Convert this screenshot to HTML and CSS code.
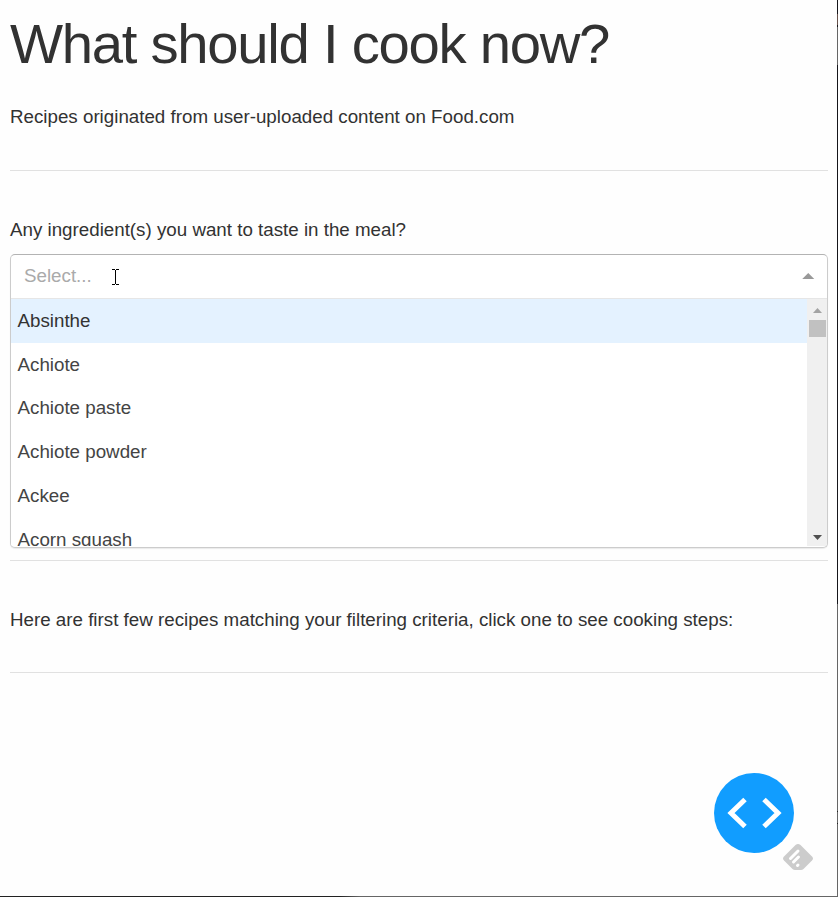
FILE: index.html
```html
<!DOCTYPE html>
<html lang="en">
<head>
<meta charset="utf-8">
<title>What should I cook now?</title>
<link rel="stylesheet" href="styles.css">
</head>
<body>
<main class="page">
  <h1 class="title">What should I cook now?</h1>
  <p class="intro">Recipes originated from user-uploaded content on Food.com</p>
  <hr class="rule">
  <label class="question">Any ingredient(s) you want to taste in the meal?</label>
  <div class="select">
    <div class="control">
      <span class="placeholder">Select...</span>
      <svg class="text-cursor" viewBox="0 0 7 16" width="7" height="16" shape-rendering="crispEdges"><path d="M0 0h3v1h1V0h3v1H4v14h3v1H4v-1H3v1H0v-1h3V1H0z"/></svg>
      <svg class="caret" viewBox="0 0 12.5 6.25" width="12.5" height="6.25"><path d="M0 6.25 6.25 0l6.25 6.25z" fill="#999"/></svg>
    </div>
    <div class="menu">
      <div class="options">
        <div class="option focused">Absinthe</div>
        <div class="option">Achiote</div>
        <div class="option">Achiote paste</div>
        <div class="option">Achiote powder</div>
        <div class="option">Ackee</div>
        <div class="option">Acorn squash</div>
      </div>
      <div class="scrollbar">
        <svg class="arrow" viewBox="0 0 9 5" width="9" height="5"><path d="M0 5 4.5 0 9 5z" fill="#a3a3a3"/></svg>
        <div class="thumb"></div>
        <svg class="arrow down" viewBox="0 0 9 5" width="9" height="5"><path d="M0 0h9L4.5 5z" fill="#505050"/></svg>
      </div>
    </div>
  </div>
  <hr class="rule after-select">
  <p class="results">Here are first few recipes matching your filtering criteria, click one to see cooking steps:</p>
  <hr class="rule last">
</main>
<div class="debug">
  <svg viewBox="0 0 80 80" width="80" height="80"><circle cx="40" cy="40" r="40" fill="#119dff"/><path d="M31 26.500 17 40 31 53.500M50 26.500 64 40 50 53.500" fill="none" stroke="#fff" stroke-width="5"/></svg>
</div>
<svg class="feed" viewBox="0 0 30 26" width="30" height="26"><path d="M12.500 1q2.500-2 5 0L29 12.500q2 2 0 4L20.500 25q-1 1-2.500 1h-6q-1.500 0-2.500-1L1 16.500q-2-2 0-4z" fill="#ccc"/><path d="M7.500 14.500l7.500-7.500M10.500 18l5-5M14.500 21.500l.5-.5" stroke="#fff" stroke-width="3" stroke-linecap="round"/></svg>
<div class="edge"></div>
<div class="edge-bottom"></div>
</body>
</html>
```
FILE: styles.css
```css
* { box-sizing: border-box; }
body {
  margin: 0;
  height: 897px;
  overflow: hidden;
  background: #fefefe;
  color: #323232;
  font: 18.75px/30px "Liberation Sans", Arial, sans-serif;
}
.page { padding: 10px 10px 0 10px; }
.title {
  margin: 0 0 24px;
  font-size: 56.25px;
  line-height: 67.500px;
  font-weight: 400;
  letter-spacing: -1.28px;
}
.intro { margin: 0; }
.rule { margin: 38px 0 44px; border: 0; border-top: 1px solid #e1e1e1; }
.question { display: block; margin-bottom: 9px; }
.select { border: 1px solid #ccc; border-top-color: #b3b3b3; border-radius: 5px; overflow: hidden; background: #fff; height: 294px; box-shadow: 0 1px 1px rgba(0,0,0,.08); }
.control { display: flex; align-items: center; height: 43px; padding: 0 12.5px 0 13px; }
.placeholder { color: #aaa; }
.text-cursor { margin: 2px 0 0 20px; }
.caret { margin-left: auto; }
.menu { display: flex; height: 248px; border-top: 1px solid #e6e6e6; }
.options { flex: 1; overflow: hidden; padding-top: .4px; background: linear-gradient(#e4f2ff 2px, #fff 2px); }
.option { height: 43.75px; line-height: 43.75px; padding-left: 6.5px; color: #444; }
.focused { background: #e4f2ff; color: #333; }
.scrollbar { width: 20px; background: #f0f0f0; display: flex; flex-direction: column; align-items: center; padding: 9px 0 6px; }
.thumb { width: 17px; height: 17px; background: #c1c1c1; margin-top: 7px; }
.down { margin-top: auto; }
.after-select { margin-top: 12px; }
.results { margin: 0; }
.last { margin-top: 37px; }
.debug { position: absolute; left: 714px; top: 773px; height: 80px; }
.feed { position: absolute; left: 783px; top: 844px; }
.edge { position: absolute; left: 837px; top: 0; width: 1px; height: 897px; background: linear-gradient(#15151a 14px, #66514b 14px 25px, #15151a 25px 27px, #666 27px 65px, #15151a 65px 604px, #666 604px 811px, #222 811px 812px, #666 812px 823px, #222 823px 824px, #666 824px); }
.edge-bottom { position: absolute; left: 0; top: 896px; width: 838px; height: 1px; background: linear-gradient(90deg, #222 340px, #666 360px); }
```
